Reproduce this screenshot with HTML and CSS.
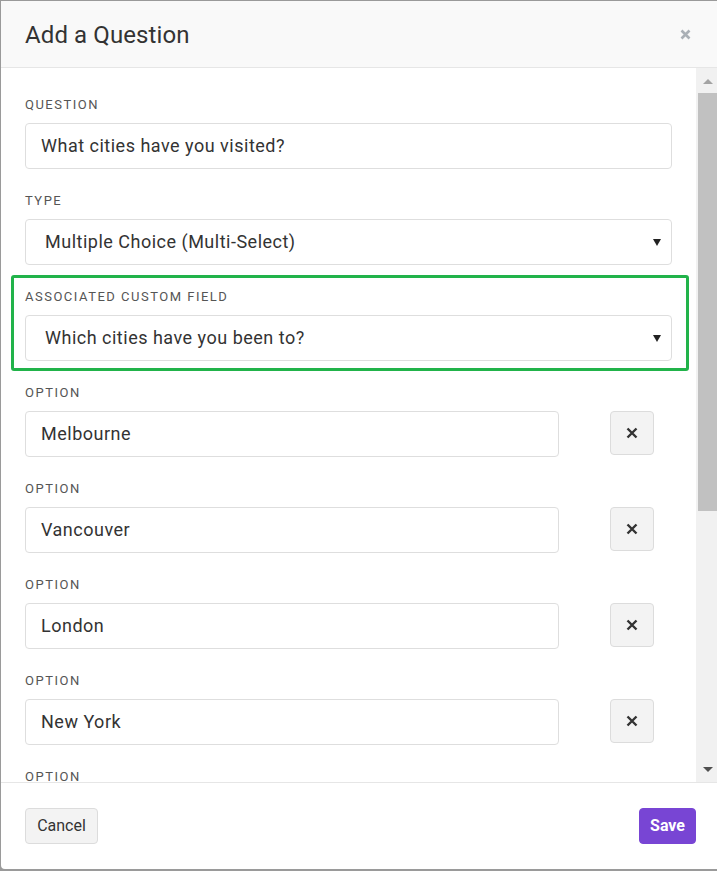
FILE: index.html
```html
<!DOCTYPE html>
<html>
<head>
<meta charset="utf-8">
<link rel="stylesheet" href="styles.css">
</head>
<body>
<div class="modal">
  <div class="modal-header">
    <h1 class="title">Add a Question</h1>
    <svg class="close" width="11" height="11" viewBox="0 0 11 11"><path d="M1.5 1.5 L9.5 9.5 M9.5 1.5 L1.5 9.5" stroke="#aab0b6" stroke-width="2.6" stroke-linecap="butt"/></svg>
  </div>
  <div class="modal-body">
    <div class="content">
      <div class="group">
        <div class="label">Question</div>
        <div class="field">What cities have you visited?</div>
      </div>
      <div class="group">
        <div class="label">Type</div>
        <div class="field select">Multiple Choice (Multi-Select)<span class="caret"></span></div>
      </div>
      <div class="group highlight">
        <div class="label">Associated Custom Field</div>
        <div class="field select">Which cities have you been to?<span class="caret"></span></div>
      </div>
      <div class="group">
        <div class="label">Option</div>
        <div class="row"><div class="field opt">Melbourne</div><button class="remove"><svg width="12" height="12" viewBox="0 0 12 12"><path d="M1.5 1.5 L10.5 10.5 M10.5 1.5 L1.5 10.5" stroke="#333" stroke-width="2.4"/></svg></button></div>
      </div>
      <div class="group">
        <div class="label">Option</div>
        <div class="row"><div class="field opt">Vancouver</div><button class="remove"><svg width="12" height="12" viewBox="0 0 12 12"><path d="M1.5 1.5 L10.5 10.5 M10.5 1.5 L1.5 10.5" stroke="#333" stroke-width="2.4"/></svg></button></div>
      </div>
      <div class="group">
        <div class="label">Option</div>
        <div class="row"><div class="field opt">London</div><button class="remove"><svg width="12" height="12" viewBox="0 0 12 12"><path d="M1.5 1.5 L10.5 10.5 M10.5 1.5 L1.5 10.5" stroke="#333" stroke-width="2.4"/></svg></button></div>
      </div>
      <div class="group">
        <div class="label">Option</div>
        <div class="row"><div class="field opt">New York</div><button class="remove"><svg width="12" height="12" viewBox="0 0 12 12"><path d="M1.5 1.5 L10.5 10.5 M10.5 1.5 L1.5 10.5" stroke="#333" stroke-width="2.4"/></svg></button></div>
      </div>
      <div class="group">
        <div class="label">Option</div>
        <div class="row"><div class="field opt">Paris</div><button class="remove"><svg width="12" height="12" viewBox="0 0 12 12"><path d="M1.5 1.5 L10.5 10.5 M10.5 1.5 L1.5 10.5" stroke="#333" stroke-width="2.4"/></svg></button></div>
      </div>
    </div>
    <div class="scrollbar">
      <div class="sb-btn"><span class="arrow-up"></span></div>
      <div class="sb-thumb"></div>
      <div class="sb-space"></div>
      <div class="sb-btn"><span class="arrow-down"></span></div>
    </div>
  </div>
  <div class="modal-footer">
    <button class="btn btn-cancel">Cancel</button>
    <button class="btn btn-save">Save</button>
  </div>
</div>
</body>
</html>
```

FILE: styles.css
```css
* { box-sizing: border-box; }
html, body { margin: 0; padding: 0; }
body {
  width: 717px;
  height: 871px;
  overflow: hidden;
  background: #9a9a9a;
  font-family: Roboto, "Liberation Sans", Arial, sans-serif;
  color: #333;
}
.modal {
  margin: 1px 0 0 1px;
  width: 716px;
  height: 868px;
  background: #fff;
  border-bottom-left-radius: 4px;
  display: flex;
  flex-direction: column;
  overflow: hidden;
}
.modal-header {
  height: 67px;
  flex: none;
  background: #f9f9f9;
  border-bottom: 1px solid #e6e6e6;
  display: flex;
  align-items: center;
  justify-content: space-between;
  padding: 0 26px 0 24px;
}
.title {
  margin: 0;
  font-size: 24px;
  font-weight: 400;
  color: #333;
  line-height: 28px;
  padding-top: 2px;
  letter-spacing: 0.1px;
}
.close { display: block; margin-top: 1px; }
.modal-body {
  height: 714px;
  flex: none;
  display: flex;
  overflow: hidden;
}
.content {
  flex: 1;
  padding: 28px 24px 0 24px;
  overflow: hidden;
}
.group { margin-bottom: 23px; }
.label {
  font-size: 13px;
  line-height: 18px;
  letter-spacing: 1.5px;
  text-transform: uppercase;
  color: #555;
  margin-bottom: 9px;
}
.field {
  height: 46px;
  border: 1px solid #dedede;
  border-radius: 4px;
  padding: 0 15px;
  font-size: 18px;
  letter-spacing: 0.5px;
  line-height: 44px;
  color: #333;
  position: relative;
}
.select { padding-left: 19px; }
.caret {
  position: absolute;
  right: 10px;
  top: 19px;
  width: 0;
  height: 0;
  border-left: 4px solid transparent;
  border-right: 4px solid transparent;
  border-top: 7px solid #222;
}
.highlight {
  margin: -13px -17px 13px -14px;
  padding: 10px 14px 7px 11px;
  border: 3px solid #21b34a;
  border-radius: 3px;
}
.row { display: flex; align-items: flex-start; }
.opt { width: 534px; flex: none; }
.remove {
  margin-left: 51px;
  width: 44px;
  height: 44px;
  background: #f3f3f3;
  border: 1px solid #dcdcdc;
  border-radius: 4px;
  padding: 0;
  display: flex;
  align-items: center;
  justify-content: center;
}
.remove svg { display: block; }
.scrollbar {
  width: 21px;
  flex: none;
  background: #f1f1f1;
  display: flex;
  flex-direction: column;
}
.sb-btn {
  height: 25px;
  flex: none;
  display: flex;
  align-items: center;
  justify-content: center;
  padding-left: 2px;
}
.sb-thumb {
  height: 418px;
  flex: none;
  margin-left: 2px;
  background: #c1c1c1;
}
.sb-space { flex: 1; }
.arrow-up {
  width: 0; height: 0;
  border-left: 5px solid transparent;
  border-right: 5px solid transparent;
  border-bottom: 5px solid #a3a3a3;
  margin-top: 1px;
}
.arrow-down {
  width: 0; height: 0;
  border-left: 5px solid transparent;
  border-right: 5px solid transparent;
  border-top: 5px solid #505050;
}
.modal-footer {
  flex: 1;
  border-top: 1px solid #e6e6e6;
  display: flex;
  justify-content: space-between;
  align-items: flex-start;
  padding: 25px 21px 0 24px;
}
.btn {
  height: 36px;
  border-radius: 4px;
  font-family: Roboto, "Liberation Sans", Arial, sans-serif;
  font-size: 16px;
  padding: 0;
  line-height: 34px;
  text-align: center;
}
.btn-cancel {
  background: #f3f3f3;
  border: 1px solid #dcdcdc;
  color: #333;
  width: 73px;
}
.btn-save {
  background: #7845d4;
  border: 1px solid #7845d4;
  color: #fff;
  font-weight: 700;
  width: 57px;
}
```
